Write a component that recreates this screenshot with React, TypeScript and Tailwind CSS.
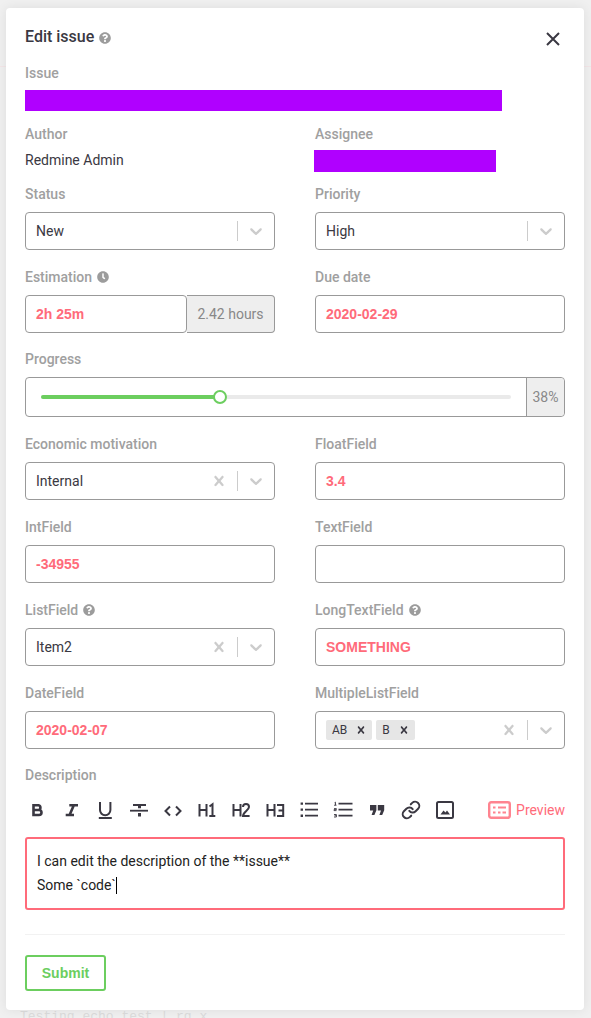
import React from 'react';
import { FaQuestionCircle, FaClock } from 'react-icons/fa';
import { Link as LinkIcon } from 'lucide-react';

const Label = ({ children, help, clock }: { children: React.ReactNode; help?: boolean; clock?: boolean }) => (
  <div className="flex h-5 items-center gap-[5px] text-sm leading-5 font-medium text-[#a0a0a0]">
    <span>{children}</span>
    {help && <FaQuestionCircle className="h-3 w-3 text-[#9c9c9c]" />}
    {clock && <FaClock className="h-3 w-3 text-[#9c9c9c]" />}
  </div>
);

const Chevron = () => (
  <svg viewBox="0 0 20 20" className="h-5 w-5 fill-[#cccccc]">
    <path d="M4.516 7.548c0.436-0.446 1.043-0.481 1.576 0l3.908 3.747 3.908-3.747c0.533-0.481 1.141-0.446 1.574 0 0.436 0.445 0.408 1.197 0 1.615-0.406 0.418-4.695 4.502-4.695 4.502-0.217 0.223-0.502 0.335-0.787 0.335s-0.57-0.112-0.789-0.335c0 0-4.287-4.084-4.695-4.502s-0.436-1.17 0-1.615z" />
  </svg>
);

const Cross = ({ className }: { className: string }) => (
  <svg viewBox="0 0 20 20" className={className}>
    <path d="M14.348 14.849c-0.469 0.469-1.229 0.469-1.697 0l-2.651-3.030-2.651 3.029c-0.469 0.469-1.229 0.469-1.697 0-0.469-0.469-0.469-1.229 0-1.697l2.758-3.15-2.759-3.152c-0.469-0.469-0.469-1.228 0-1.697s1.228-0.469 1.697 0l2.652 3.031 2.651-3.031c0.469-0.469 1.228-0.469 1.697 0s0.469 1.229 0 1.697l-2.758 3.152 2.758 3.15c0.469 0.469 0.469 1.229 0 1.698z" />
  </svg>
);

const SelectBox = ({ children, clearable }: { children: React.ReactNode; clearable?: boolean }) => (
  <div className="flex h-[38px] items-center rounded-[4px] border border-[#999999] bg-white pl-[10px] text-sm text-[#3a3842]">
    <div className="flex min-w-0 flex-1 items-center">{children}</div>
    {clearable && <Cross className="mr-2 h-5 w-5 fill-[#cccccc]" />}
    <span className="h-5 w-px bg-[#cccccc]" />
    <span className="mx-2">
      <Chevron />
    </span>
  </div>
);

const TextInput = ({ value }: { value?: string }) => (
  <div className="flex h-[38px] items-center rounded-[4px] border border-[#999999] bg-white px-[10px] font-['Liberation_Sans',sans-serif] text-sm font-bold text-[#ff6b7a]">
    {value}
  </div>
);

const Tag = ({ children }: { children: React.ReactNode }) => (
  <div className="flex h-5 items-center rounded-[2px] bg-[#e6e6e6] pl-[6px] text-xs text-[#3a3842]">
    <span>{children}</span>
    <Cross className="mr-[4px] ml-[7px] h-[14px] w-[14px] fill-[#3a3842]" />
  </div>
);

// toolbar icons, 20x20 box
const ToolIcon = ({ children }: { children: React.ReactNode }) => (
  <svg viewBox="0 0 20 20" className="h-5 w-5 fill-none stroke-[#3a3842] stroke-2">
    {children}
  </svg>
);

const HLetter = () => <path d="M2.5 4v12.5M9.5 4v12.5M2.5 10h7" />;

const toolbar = [
  <path d="M6.5 5.3V15M6.5 5.3h5a2.4 2.4 0 0 1 0 4.7h-5M11.5 10h.5a2.5 2.5 0 0 1 0 5H5.2M5.2 5.3h2" className="stroke-[2.6]" />,
  <path d="M8.3 5.2H17M12.8 5.2L8.6 15M4.7 15H13" className="stroke-[2.6]" />,
  <>
    <path d="M5 2v8a5 5 0 0 0 10.4 0V2" />
    <path d="M3.8 18h13" />
  </>,
  <>
    <path d="M1 10.7h18" className="stroke-[1.8]" />
    <path d="M4 5h13" />
    <path d="M10.5 4v4.2M10.5 13v3.4" className="stroke-[3]" />
  </>,
  <path d="M7 6.5L2.5 11 7 15.5M13 6.5l4.5 4.5-4.5 4.5" />,
  <>
    <HLetter />
    <path d="M12.5 6.5l3-2.3v12.3M12.3 16h6" />
  </>,
  <>
    <HLetter />
    <path d="M12 7a3 3 0 0 1 6 0c0 3-6 5.2-6 9h6.6" />
  </>,
  <>
    <HLetter />
    <path d="M12 5h6.2v11H12M13.5 10.5h4.7" />
  </>,
  <>
    <path d="M6 3.6h13M6 9.6h13M6 15.7h13" className="stroke-[1.8]" />
    <path d="M1.6 3.6h2.4M1.6 9.6h2.4M1.6 15.7h2.4" className="stroke-[2.4]" />
  </>,
  <>
    <path d="M5.5 3.6h14M5.5 9.6h14M5.5 15.7h14" className="stroke-[1.8]" />
    <path d="M1.5 2.8l1-.6v3M1 5.2h2.5M1 8.6h2.4v1H1v1h2.5M1 14.5h2.4v2.5H1M1.5 15.7h1.9" className="stroke-[0.9]" />
  </>,
  <path
    d="M3 5h6.4v5.2L7.4 15H4.6l1.6-4.6H3zM10.8 5h6.4v5.2l-2 4.8h-2.8l1.6-4.6h-3.2z"
    className="fill-[#3a3842] stroke-0"
  />,
  null,
  <>
    <rect x="2" y="2" width="16" height="16" rx="1.5" />
    <path d="M5.5 14.5l3-4 2 2 1.5-2 3 4z" className="fill-[#3a3842] stroke-0" />
  </>,
];

export default function App() {
  return (
    <div className="relative h-[1018px] w-[591px] overflow-hidden bg-[#f0f0f0] font-['Roboto',sans-serif]">
      {/* page behind the modal */}
      <div className="absolute top-[66px] left-0 h-px w-full bg-[#f3e6e8]" />
      <div className="absolute top-[1007px] left-[20px] font-['Liberation_Mono',monospace] text-[13px] text-[#dcdcdc]">
        Testing echo test | rg x
      </div>

      <div className="relative mt-2 ml-[6px] h-[1002px] w-[578px] rounded-[4px] bg-white px-[19px] shadow-[0_0_12px_rgba(0,0,0,0.08)]">
        <div className="flex h-[55px] items-center justify-between pt-[3px]">
          <div className="flex items-center gap-[5px] text-base font-medium text-[#3a3842]">
            <span>Edit issue</span>
            <FaQuestionCircle className="mt-[2px] h-3 w-3 text-[#9c9c9c]" />
          </div>
          <svg viewBox="0 0 16 16" className="mt-1 mr-[4px] h-4 w-4 fill-none stroke-[#3a3842] stroke-2">
            <path d="M2 2l12 12M14 2L2 14" />
          </svg>
        </div>

        <Label>Issue</Label>
        <div className="mt-[7px] h-[21px] w-[477px] bg-[#b000ff]" />

        <div className="mt-[13px] grid grid-cols-2 gap-x-10">
          <div>
            <Label>Author</Label>
            <div className="mt-[6px] flex h-[22px] items-center pb-[2px] text-sm text-[#3a3842]">Redmine Admin</div>
          </div>
          <div>
            <Label>Assignee</Label>
            <div className="mt-[6px] -ml-px h-[22px] w-[182px] bg-[#b000ff]" />
          </div>
        </div>

        <div className="mt-3 grid grid-cols-2 gap-x-10 gap-y-[17px]">
          <div>
            <Label>Status</Label>
            <div className="mt-2">
              <SelectBox>New</SelectBox>
            </div>
          </div>
          <div>
            <Label>Priority</Label>
            <div className="mt-2">
              <SelectBox>High</SelectBox>
            </div>
          </div>

          <div>
            <Label clock>Estimation</Label>
            <div className="mt-2 flex h-[38px] text-sm">
              <div className="flex flex-1 items-center rounded-[4px] border border-[#999999] px-[10px] font-['Liberation_Sans',sans-serif] font-bold text-[#ff6b7a]">
                2h 25m
              </div>
              <div className="flex w-[88px] items-center justify-center rounded-r-[4px] border border-l-0 border-[#999999] bg-[#eeeeee] text-[#888888]">
                2.42 hours
              </div>
            </div>
          </div>
          <div>
            <Label>Due date</Label>
            <div className="mt-2">
              <TextInput value="2020-02-29" />
            </div>
          </div>

          <div className="col-span-2 -mt-px">
            <Label>Progress</Label>
            <div className="mt-2 flex h-10 rounded-[4px] border border-[#999999]">
              <div className="flex flex-1 items-center px-[15px]">
                <div className="relative h-1 w-full rounded-full bg-[#eaeaea]">
                  <div className="h-1 w-[38%] rounded-full bg-[#6cce5f]" />
                  <div className="absolute top-[-5px] left-[38%] -ml-[7px] h-[14px] w-[14px] rounded-full border-2 border-[#6cce5f] bg-white" />
                </div>
              </div>
              <div className="flex w-[38px] items-center justify-center rounded-r-[4px] border-l border-[#999999] bg-[#eeeeee] text-sm text-[#888888]">
                38%
              </div>
            </div>
          </div>

          <div>
            <Label>Economic motivation</Label>
            <div className="mt-2">
              <SelectBox clearable>Internal</SelectBox>
            </div>
          </div>
          <div>
            <Label>FloatField</Label>
            <div className="mt-2">
              <TextInput value="3.4" />
            </div>
          </div>

          <div>
            <Label>IntField</Label>
            <div className="mt-2">
              <TextInput value="-34955" />
            </div>
          </div>
          <div>
            <Label>TextField</Label>
            <div className="mt-2">
              <TextInput />
            </div>
          </div>

          <div>
            <Label help>ListField</Label>
            <div className="mt-2">
              <SelectBox clearable>Item2</SelectBox>
            </div>
          </div>
          <div>
            <Label help>LongTextField</Label>
            <div className="mt-2">
              <TextInput value="SOMETHING" />
            </div>
          </div>

          <div>
            <Label>DateField</Label>
            <div className="mt-2">
              <TextInput value="2020-02-07" />
            </div>
          </div>
          <div>
            <Label>MultipleListField</Label>
            <div className="mt-2">
              <SelectBox clearable>
                <div className="flex gap-1">
                  <Tag>AB</Tag>
                  <Tag>B</Tag>
                </div>
              </SelectBox>
            </div>
          </div>
        </div>

        <div className="mt-4">
          <Label>Description</Label>
        </div>
        <div className="mt-2 flex h-[34px] items-center justify-between">
          <div className="flex items-center gap-[14px] pl-[2px]">
            {toolbar.map((icon, i) =>
              icon ? (
                <ToolIcon key={i}>{icon}</ToolIcon>
              ) : (
                <LinkIcon key={i} className="h-5 w-5 text-[#3a3842]" strokeWidth={2.4} />
              ),
            )}
          </div>
          <div className="flex items-center gap-[5px] text-sm text-[#ff6b7a]">
            <svg viewBox="0 0 23 18" className="h-[18px] w-[23px] fill-none stroke-[#ff8490] stroke-[2.4]">
              <rect x="1.2" y="1.2" width="20.6" height="15.6" rx="2" />
              <path d="M5 6.5h2.5M10 6.5h8M5 11.5h2.5M10 11.5h2.5M14.5 11.5h3.5" className="stroke-[1.8]" />
            </svg>
            <span>Preview</span>
          </div>
        </div>

        <div className="mt-[10px] h-[73px] rounded-[3px] border-2 border-[#ff6b7a] p-[10px] text-sm leading-6 text-[#222222]">
          <div>I can edit the description of the **issue**</div>
          <div className="flex items-center">
            Some `code`
            <span className="h-[17px] w-px bg-black" />
          </div>
        </div>

        <div className="mt-6 h-px bg-[#f2f2f2]" />

        <button className="mt-5 flex h-9 w-[81px] items-center justify-center rounded-[3px] border-2 border-[#6cce5f] font-['Liberation_Sans',sans-serif] text-sm font-bold text-[#6cce5f]">
          Submit
        </button>
      </div>
    </div>
  );
}
